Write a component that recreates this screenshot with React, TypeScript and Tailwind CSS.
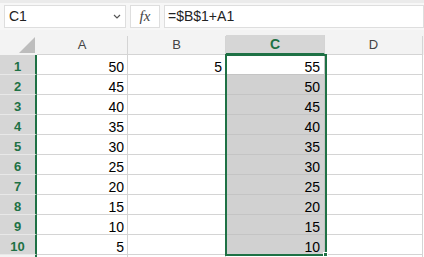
import React from "react";

const GREEN = "#1e7145";

const colA = [50, 45, 40, 35, 30, 25, 20, 15, 10, 5];
const colC = [55, 50, 45, 40, 35, 30, 25, 20, 15, 10];

function Chevron() {
  return (
    <svg width="8" height="5" viewBox="0 0 8 5" className="text-[#555]">
      <path d="M1 1 L4 4 L7 1" fill="none" stroke="currentColor" strokeWidth="1.2" />
    </svg>
  );
}

export default function App() {
  return (
    <div
      className="relative w-[424px] h-[257px] overflow-hidden bg-white text-black"
      style={{ fontFamily: '"Liberation Sans", Arial, sans-serif' }}
    >
      {/* formula bar */}
      <div className="h-[30px] bg-[#f7f7f7] border-t-[3px] border-[#ebebeb] flex items-start pt-[2px] pl-[4px] gap-[4px]">
        <div className="w-[122px] h-[23px] bg-white border border-[#dedede] flex items-center justify-between pl-[4px] pr-[4px]">
          <span className="text-[14px] text-[#222]">C1</span>
          <Chevron />
        </div>
        <div className="w-[30px] h-[23px] bg-white border border-[#dedede] flex items-center justify-center">
          <span className="text-[15px] italic text-[#444]" style={{ fontFamily: '"Liberation Serif", serif' }}>
            fx
          </span>
        </div>
        <div className="flex-1 h-[23px] bg-white border border-[#dedede] flex items-center pl-[3px]">
          <span className="text-[14px] text-[#222]">=$B$1+A1</span>
        </div>
      </div>

      {/* column headers */}
      <div className="h-[25px] bg-[#f3f3f3] flex items-end">
        <div className="w-[37px] h-[25px] relative">
          <svg width="17" height="16" viewBox="0 0 17 16" className="absolute left-[19px] top-[7px]">
            <polygon points="16,0 16,16 0,16" fill="#bdbdbd" />
          </svg>
        </div>
        <div className="w-[91px] h-[19px] border-r border-b border-[#d4d4d4] flex items-center justify-center text-[13px] text-[#444]">A</div>
        <div className="w-[98px] h-[19px] border-r border-b border-[#d4d4d4] flex items-center justify-center text-[13px] text-[#444]">B</div>
        <div
          className="w-[99px] h-[20px] bg-[#d6d6d6] border-r border-[#d4d4d4] border-b-2 flex items-center justify-center text-[14px] font-bold"
          style={{ borderBottomColor: GREEN, color: GREEN }}
        >
          C
        </div>
        <div className="w-[98px] h-[19px] border-r border-b border-[#d4d4d4] flex items-center justify-center text-[13px] text-[#444]">D</div>
      </div>

      {/* rows */}
      {colA.map((a, i) => (
        <div key={i} className="flex h-[20px]">
          <div
            className="w-[37px] h-[20px] bg-[#d6d6d6] border-b border-[#e8e8e8] border-r-2 flex items-end justify-center pb-[1px] leading-none text-[13px] font-bold"
            style={{ borderRightColor: GREEN, color: GREEN }}
          >
            {i + 1}
          </div>
          <div className="w-[91px] h-[20px] border-r border-b border-[#d4d4d4] flex items-end justify-end pr-[3px] leading-none text-[14px]">
            {a}
          </div>
          <div className="w-[98px] h-[20px] border-r border-b border-[#d4d4d4] flex items-end justify-end pr-[3px] leading-none text-[14px]">
            {i === 0 ? 5 : ""}
          </div>
          <div
            className={`w-[99px] h-[20px] border-r border-b border-[#c4c4c4] flex items-end justify-end pr-[4px] leading-none text-[14px] ${
              i === 0 ? "bg-white" : "bg-[#d1d1d1]"
            }`}
          >
            {colC[i]}
          </div>
          <div className="w-[98px] h-[20px] border-r border-b border-[#d4d4d4]" />
        </div>
      ))}
      <div className="flex h-[4px]">
        <div className="w-[37px] bg-[#f3f3f3] border-r-2" style={{ borderRightColor: GREEN }} />
        <div className="w-[91px] border-r border-[#d4d4d4]" />
        <div className="w-[98px] border-r border-[#d4d4d4]" />
        <div className="w-[99px] border-r border-[#d4d4d4]" />
        <div className="w-[98px] border-r border-[#d4d4d4]" />
      </div>

      {/* selection outline C1:C10 */}
      <div
        className="absolute left-[225px] top-[54px] w-[102px] h-[202px] border-2 pointer-events-none"
        style={{ borderColor: GREEN }}
      />
      <div
        className="absolute left-[323px] top-[252px] w-[5px] h-[5px] border border-white"
        style={{ backgroundColor: GREEN }}
      />
    </div>
  );
}
